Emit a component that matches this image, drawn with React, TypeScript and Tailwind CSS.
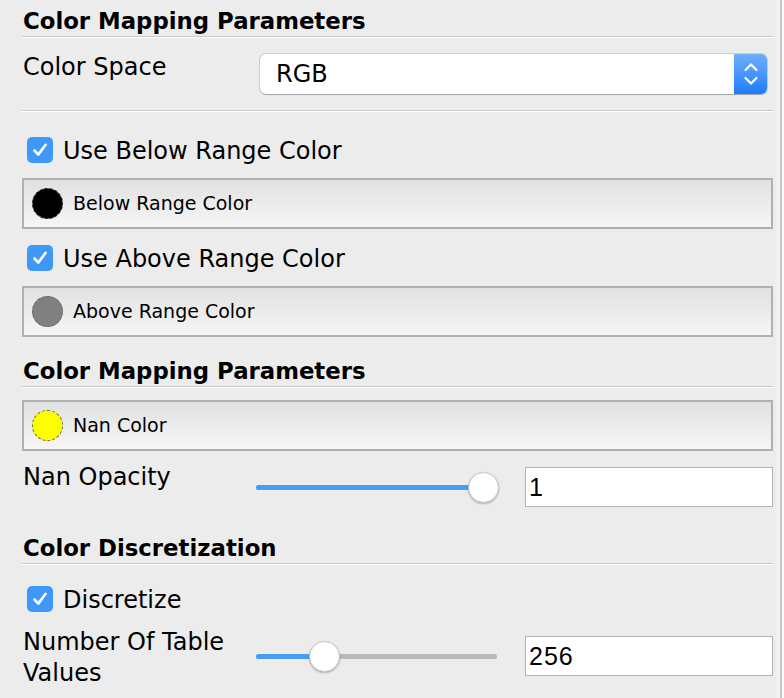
import React from "react";

const MAIN = "font-['DejaVu_Sans',sans-serif]";

function Header({ text, className = "" }: { text: string; className?: string }) {
  return (
    <div className={`pt-[7px] pb-[1px] border-b border-[#c9c9c9] shadow-[0_1px_0_#ffffff] ${className}`}>
      <div className={`${MAIN} text-[22.8px] leading-[28px] font-bold text-black pl-[1px]`}>{text}</div>
    </div>
  );
}

function Check({ label, className = "" }: { label: string; className?: string }) {
  return (
    <div className={`flex items-center h-[26px] ${className}`}>
      <div className="ml-[5px] w-[26px] h-[26px] rounded-[5px] bg-[#3d98f8] flex items-center justify-center">
        <svg width="18" height="18" viewBox="0 0 18 18">
          <path d="M3.5 9.5 L7.3 13.6 L14.6 3.8" fill="none" stroke="#fff" strokeWidth="2.6" strokeLinecap="round" strokeLinejoin="round" />
        </svg>
      </div>
      <span className={`${MAIN} ml-[10px] text-[24px] leading-[28px] text-black translate-y-[1px]`}>{label}</span>
    </div>
  );
}

function ColorButton({ label, swatch, className = "" }: { label: string; swatch: string; className?: string }) {
  return (
    <div
      className={`h-[51px] border-2 border-[#b0b0b0] bg-gradient-to-b from-[#e1e1e1] to-[#f6f6f6] flex items-center pl-[8px] ${className}`}
    >
      <div className={`w-[31px] h-[31px] rounded-full border border-dashed border-[#666666] ${swatch}`} />
      <span className="ml-[10px] font-['DejaVu_Sans',sans-serif] text-[19px] text-black">{label}</span>
    </div>
  );
}

function Slider({ pct }: { pct: number }) {
  return (
    <div className="relative w-[242px] h-[31px]">
      <div className="absolute left-0 right-[1px] top-[13px] h-[5px] rounded-full bg-[#b9b9b9]" />
      <div className="absolute left-0 top-[13px] h-[5px] rounded-full bg-[#469df6]" style={{ width: `${pct}%` }} />
      <div
        className="absolute top-0 w-[31px] h-[31px] rounded-full bg-white border border-[#c4c4c4] shadow-[0_1px_2px_rgba(0,0,0,0.25)]"
        style={{ left: `calc(${pct}% - 15px)` }}
      />
    </div>
  );
}

function NumInput({ value }: { value: string }) {
  return (
    <div className="w-[248px] h-[40px] border border-[#b3b3b3] bg-white flex items-center pl-[3px]">
      <span className="font-['Liberation_Sans',sans-serif] text-[25px] leading-[30px] tracking-[1px] text-black">{value}</span>
    </div>
  );
}

export default function App() {
  return (
    <div className="w-[784px] h-[698px] bg-[#ececec] flex overflow-hidden">
      <div className="w-[776px] pl-[22px] pr-[3px] flex flex-col">
        <Header text="Color Mapping Parameters" />

        <div className="mt-[17px] h-[40px] flex">
          <div className={`${MAIN} w-[234px] -mt-[1px] pl-[1px] text-[24px] leading-[28px] text-black`}>Color Space</div>
          <div className="ml-[4px] w-[507px] h-[40px] rounded-[6px] bg-white shadow-[0_0_0_1px_rgba(0,0,0,0.12),0_1px_1px_rgba(0,0,0,0.2)] flex overflow-hidden">
            <div className={`${MAIN} flex-1 pl-[16px] flex items-center text-[24px] text-black`}>RGB</div>
            <div className="w-[33px] h-full bg-gradient-to-b from-[#6db0fb] to-[#1a7bf9] flex items-center justify-center">
              <svg width="18" height="28" viewBox="0 0 18 28">
                <path d="M3.5 10 L9 4.5 L14.5 10" fill="none" stroke="#fff" strokeWidth="2.2" strokeLinecap="round" strokeLinejoin="round" />
                <path d="M3.5 18 L9 23.5 L14.5 18" fill="none" stroke="#fff" strokeWidth="2.2" strokeLinecap="round" strokeLinejoin="round" />
              </svg>
            </div>
          </div>
        </div>

        <div className="mt-[16px] h-[2px] border-t border-[#c9c9c9] border-b border-b-white" />

        <Check label="Use Below Range Color" className="mt-[25px]" />
        <ColorButton label="Below Range Color" swatch="bg-black" className="mt-[15px]" />
        <Check label="Use Above Range Color" className="mt-[16px]" />
        <ColorButton label="Above Range Color" swatch="bg-[#808080]" className="mt-[15px]" />

        <Header text="Color Mapping Parameters" className="mt-[13px]" />
        <ColorButton label="Nan Color" swatch="bg-[#ffff00]" className="mt-[13px]" />

        <div className="mt-[16px] h-[40px] flex">
          <div className={`${MAIN} w-[234px] -mt-[4px] pl-[1px] text-[24px] leading-[28px] text-black`}>Nan Opacity</div>
          <div className="flex items-center">
            <Slider pct={94} />
          </div>
          <div className="ml-[27px]">
            <NumInput value="1" />
          </div>
        </div>

        <Header text="Color Discretization" className="mt-[20px]" />
        <Check label="Discretize" className="mt-[22px]" />

        <div className="mt-[14px] h-[60px] flex items-center">
          <div className={`${MAIN} w-[234px] pl-[1px] pt-[3px] text-[24px] leading-[31px] text-black`}>
            Number Of Table
            <br />
            Values
          </div>
          <Slider pct={28} />
          <div className="ml-[27px]">
            <NumInput value="256" />
          </div>
        </div>
      </div>
      <div className="w-[4px] bg-[#f2f2f2]" />
      <div className="w-[2px] bg-[#c8c8c8]" />
      <div className="w-[2px] bg-[#fafafa]" />
    </div>
  );
}
